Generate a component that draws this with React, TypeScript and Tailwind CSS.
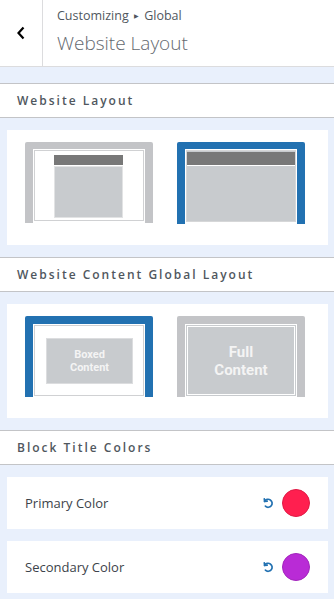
import React from "react";

const BLUE = "#2271b1";
const FRAME = "#c3c4c7";

const SectionTitle = ({ title }: { title: string }) => (
  <div className="h-[35px] border-y border-[#c3c4c7] bg-white flex items-center px-[17px]">
    <h3 className="text-[12px] font-semibold tracking-[2px] text-[#50575e]">{title}</h3>
  </div>
);

// layout previews
const BoxedLayout = () => (
  <svg width="128" height="81" viewBox="0 0 128 81">
    <path d="M0 2 Q0 0 2 0 H126 Q128 0 128 2 V81 H0 Z" fill={FRAME} />
    <rect x="8" y="7" width="112" height="74" fill="#fff" />
    <rect x="9.5" y="8.5" width="109" height="70" fill="none" stroke="#d0d1d3" />
    <rect x="29" y="13" width="69" height="10" fill="#787878" />
    <rect x="29.5" y="24.5" width="68" height="51" fill="#c8cbce" stroke="#e2e3e4" />
  </svg>
);

const FullLayout = () => (
  <svg width="128" height="82" viewBox="0 0 128 82">
    <path d="M0 2 Q0 0 2 0 H126 Q128 0 128 2 V82 H0 Z" fill={BLUE} />
    <rect x="8" y="7" width="112" height="75" fill="#fff" />
    <rect x="9.5" y="8.5" width="109" height="71" fill="#c8cbce" stroke="#d6d7d8" />
    <rect x="10" y="10" width="108" height="13" fill="#787878" />
    <rect x="10" y="23" width="108" height="1" fill="#fff" />
  </svg>
);

const BoxedContent = () => (
  <svg width="128" height="81" viewBox="0 0 128 81">
    <path d="M0 2 Q0 0 2 0 H126 Q128 0 128 2 V81 H0 Z" fill={BLUE} />
    <rect x="8" y="8" width="112" height="73" fill="#fff" />
    <rect x="9.5" y="9.5" width="109" height="70" fill="none" stroke="#d0d1d3" />
    <rect x="21.5" y="22.5" width="86" height="45" fill="#c8cbce" stroke="#dcdddf" />
    <text x="64.5" y="41.5" textAnchor="middle" fontFamily="Roboto, sans-serif" fontWeight="700" fontSize="11" fill="#f4f4f4">Boxed</text>
    <text x="64.5" y="55" textAnchor="middle" fontFamily="Roboto, sans-serif" fontWeight="700" fontSize="11" fill="#f4f4f4">Content</text>
  </svg>
);

const FullContent = () => (
  <svg width="128" height="81" viewBox="0 0 128 81">
    <path d="M0 2 Q0 0 2 0 H126 Q128 0 128 2 V81 H0 Z" fill={FRAME} />
    <rect x="8.5" y="8.5" width="111" height="72" fill="#c8cbce" stroke="#fff" />
    <rect x="10.5" y="10.5" width="107" height="68" fill="none" stroke="#fff" />
    <text x="64" y="41" textAnchor="middle" fontFamily="Roboto, sans-serif" fontWeight="700" fontSize="15" fill="#f4f4f4">Full</text>
    <text x="64" y="58.5" textAnchor="middle" fontFamily="Roboto, sans-serif" fontWeight="700" fontSize="15" fill="#f4f4f4">Content</text>
  </svg>
);

const ResetIcon = () => (
  <svg width="12" height="12" viewBox="0 0 12 12" fill="none" stroke={BLUE} strokeWidth="1.7" strokeLinecap="round">
    <path d="M2.6 4.4 A4 4 0 1 1 3.4 9.2" />
    <path d="M2.3 1.8 L2.6 4.5 L5.2 4.1" strokeLinejoin="round" />
  </svg>
);

const ColorRow = ({ label, color, border }: { label: string; color: string; border: string }) => (
  <div className="h-[52px] bg-white flex items-center pl-[18px] pr-[18px]">
    <span className="flex-1 text-[13px] text-[#3c434a] relative top-[1px]">{label}</span>
    <ResetIcon />
    <span
      className="ml-[8px] w-[28px] h-[28px] rounded-full border"
      style={{ backgroundColor: color, borderColor: border }}
    />
  </div>
);

export default function App() {
  return (
    <div className="w-[334px] h-[599px] overflow-hidden bg-[#e9f0fc]" style={{ fontFamily: '"Open Sans", "Noto Sans", sans-serif' }}>
      {/* header */}
      <div className="h-[67px] bg-white border-b border-[#dcdcde] flex">
        <button className="w-[43px] h-full border-r border-[#dcdcde] flex items-center justify-center">
          <svg width="10" height="14" viewBox="0 0 10 14" fill="none" stroke="#000" strokeWidth="2.2">
            <path d="M7.5 1.5 L2.5 7 L7.5 12.5" />
          </svg>
        </button>
        <div className="pl-[14px] pt-[6px]">
          <div className="text-[12.5px] text-[#50575e] leading-[20px]">
            Customizing <span className="text-[6px] relative -top-[2px] px-[2px]">▶</span> Global
          </div>
          <div className="text-[19px] font-light text-[#646970] leading-[26px] mt-[2px]">Website Layout</div>
        </div>
      </div>
      <div className="h-[16px]" />

      <SectionTitle title="Website Layout" />
      <div className="pt-[12px] pb-[12px] pl-[7px] pr-[6px]">
        <div className="bg-white h-[115px] pt-[12px] pl-[18px] flex gap-[24px] items-start">
          <BoxedLayout />
          <FullLayout />
        </div>
      </div>

      <SectionTitle title="Website Content Global Layout" />
      <div className="pt-[12px] pb-[12px] pl-[7px] pr-[6px]">
        <div className="bg-white h-[114px] pt-[12px] pl-[18px] flex gap-[24px] items-start">
          <BoxedContent />
          <FullContent />
        </div>
      </div>

      <SectionTitle title="Block Title Colors" />
      <div className="pt-[12px] pl-[7px] pr-[6px] flex flex-col gap-[12px]">
        <ColorRow label="Primary Color" color="#ff1f4f" border="#e01a45" />
        <ColorRow label="Secondary Color" color="#b92bd6" border="#a326bd" />
      </div>
    </div>
  );
}
